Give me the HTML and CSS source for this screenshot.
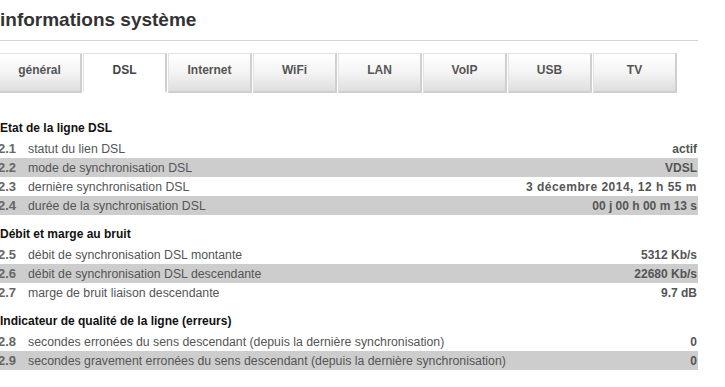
FILE: index.html
```html
<!DOCTYPE html>
<html lang="fr">
<head>
    <meta charset="UTF-8" />
    <title>informations système</title>
    <link rel="stylesheet" href="styles.css">
</head>
<body>
<div class="page">
    <h1 class="title">informations système</h1>

    <ul class="tabs">
        <li>général</li>
        <li class="active">DSL</li>
        <li>Internet</li>
        <li>WiFi</li>
        <li>LAN</li>
        <li>VoIP</li>
        <li>USB</li>
        <li>TV</li>
    </ul>

    <h3 class="section first">Etat de la ligne DSL</h3>
    <div class="row"><span class="num">2.1</span><span class="label">statut du lien DSL</span><span class="value">actif</span></div>
    <div class="row alt"><span class="num">2.2</span><span class="label">mode de synchronisation DSL</span><span class="value">VDSL</span></div>
    <div class="row"><span class="num">2.3</span><span class="label">dernière synchronisation DSL</span><span class="value wide">3 décembre 2014, 12 h 55 m</span></div>
    <div class="row alt"><span class="num">2.4</span><span class="label">durée de la synchronisation DSL</span><span class="value">00 j 00 h 00 m 13 s</span></div>

    <h3 class="section">Débit et marge au bruit</h3>
    <div class="row"><span class="num">2.5</span><span class="label">débit de synchronisation DSL montante</span><span class="value">5312 Kb/s</span></div>
    <div class="row alt"><span class="num">2.6</span><span class="label">débit de synchronisation DSL descendante</span><span class="value">22680 Kb/s</span></div>
    <div class="row"><span class="num">2.7</span><span class="label">marge de bruit liaison descendante</span><span class="value">9.7 dB</span></div>

    <h3 class="section">Indicateur de qualité de la ligne (erreurs)</h3>
    <div class="row"><span class="num">2.8</span><span class="label">secondes erronées du sens descendant (depuis la dernière synchronisation)</span><span class="value">0</span></div>
    <div class="row alt"><span class="num">2.9</span><span class="label">secondes gravement erronées du sens descendant (depuis la dernière synchronisation)</span><span class="value">0</span></div>
</div>
</body>
</html>
```

FILE: styles.css
```css
body {
    background-color: white;
    color: #555;
    font-family: "Liberation Sans", Arial, sans-serif;
    font-size: 12px;
    margin: 0;
}
.page {
    width: 700px;
    margin-left: -2px;
}
.title {
    margin: 0 0 0 2px;
    padding-top: 8px;
    height: 32px;
    font-size: 19px;
    line-height: 24px;
    color: #333;
    border-bottom: 1px solid #d4d4d4;
}
.tabs {
    list-style: none;
    margin: 12px 0 0 0;
    padding: 0;
    display: flex;
    gap: 1px;
}
.tabs li {
    box-sizing: border-box;
    width: 84px;
    height: 40px;
    line-height: 33px;
    padding-bottom: 5px;
    text-align: center;
    font-weight: bold;
    color: #555;
    border-style: solid;
    border-width: 1px 2px 2px 1px;
    border-color: #e2e2e2 #cfcfcf #cfcfcf #e2e2e2;
    background: linear-gradient(#ffffff, #f4f4f4 50%, #dedede);
}
.tabs li.active {
    background: white;
    border-bottom-color: white;
    color: #444;
}
.section {
    margin: 9px 0 1px 2px;
    height: 20px;
    line-height: 20px;
    font-size: 12px;
    color: #111;
}
.section.first {
    margin-top: 25px;
}
.row {
    display: flex;
    align-items: center;
    height: 19px;
}
.row.alt {
    background-color: #cdcdcd;
}
.num {
    width: 30px;
    font-weight: bold;
    font-size: 13px;
    color: #666;
}
.label {
    flex: 1;
    font-size: 12.3px;
}
.value {
    padding-right: 1px;
    font-weight: bold;
}
.value.wide {
    letter-spacing: 0.5px;
}
```
